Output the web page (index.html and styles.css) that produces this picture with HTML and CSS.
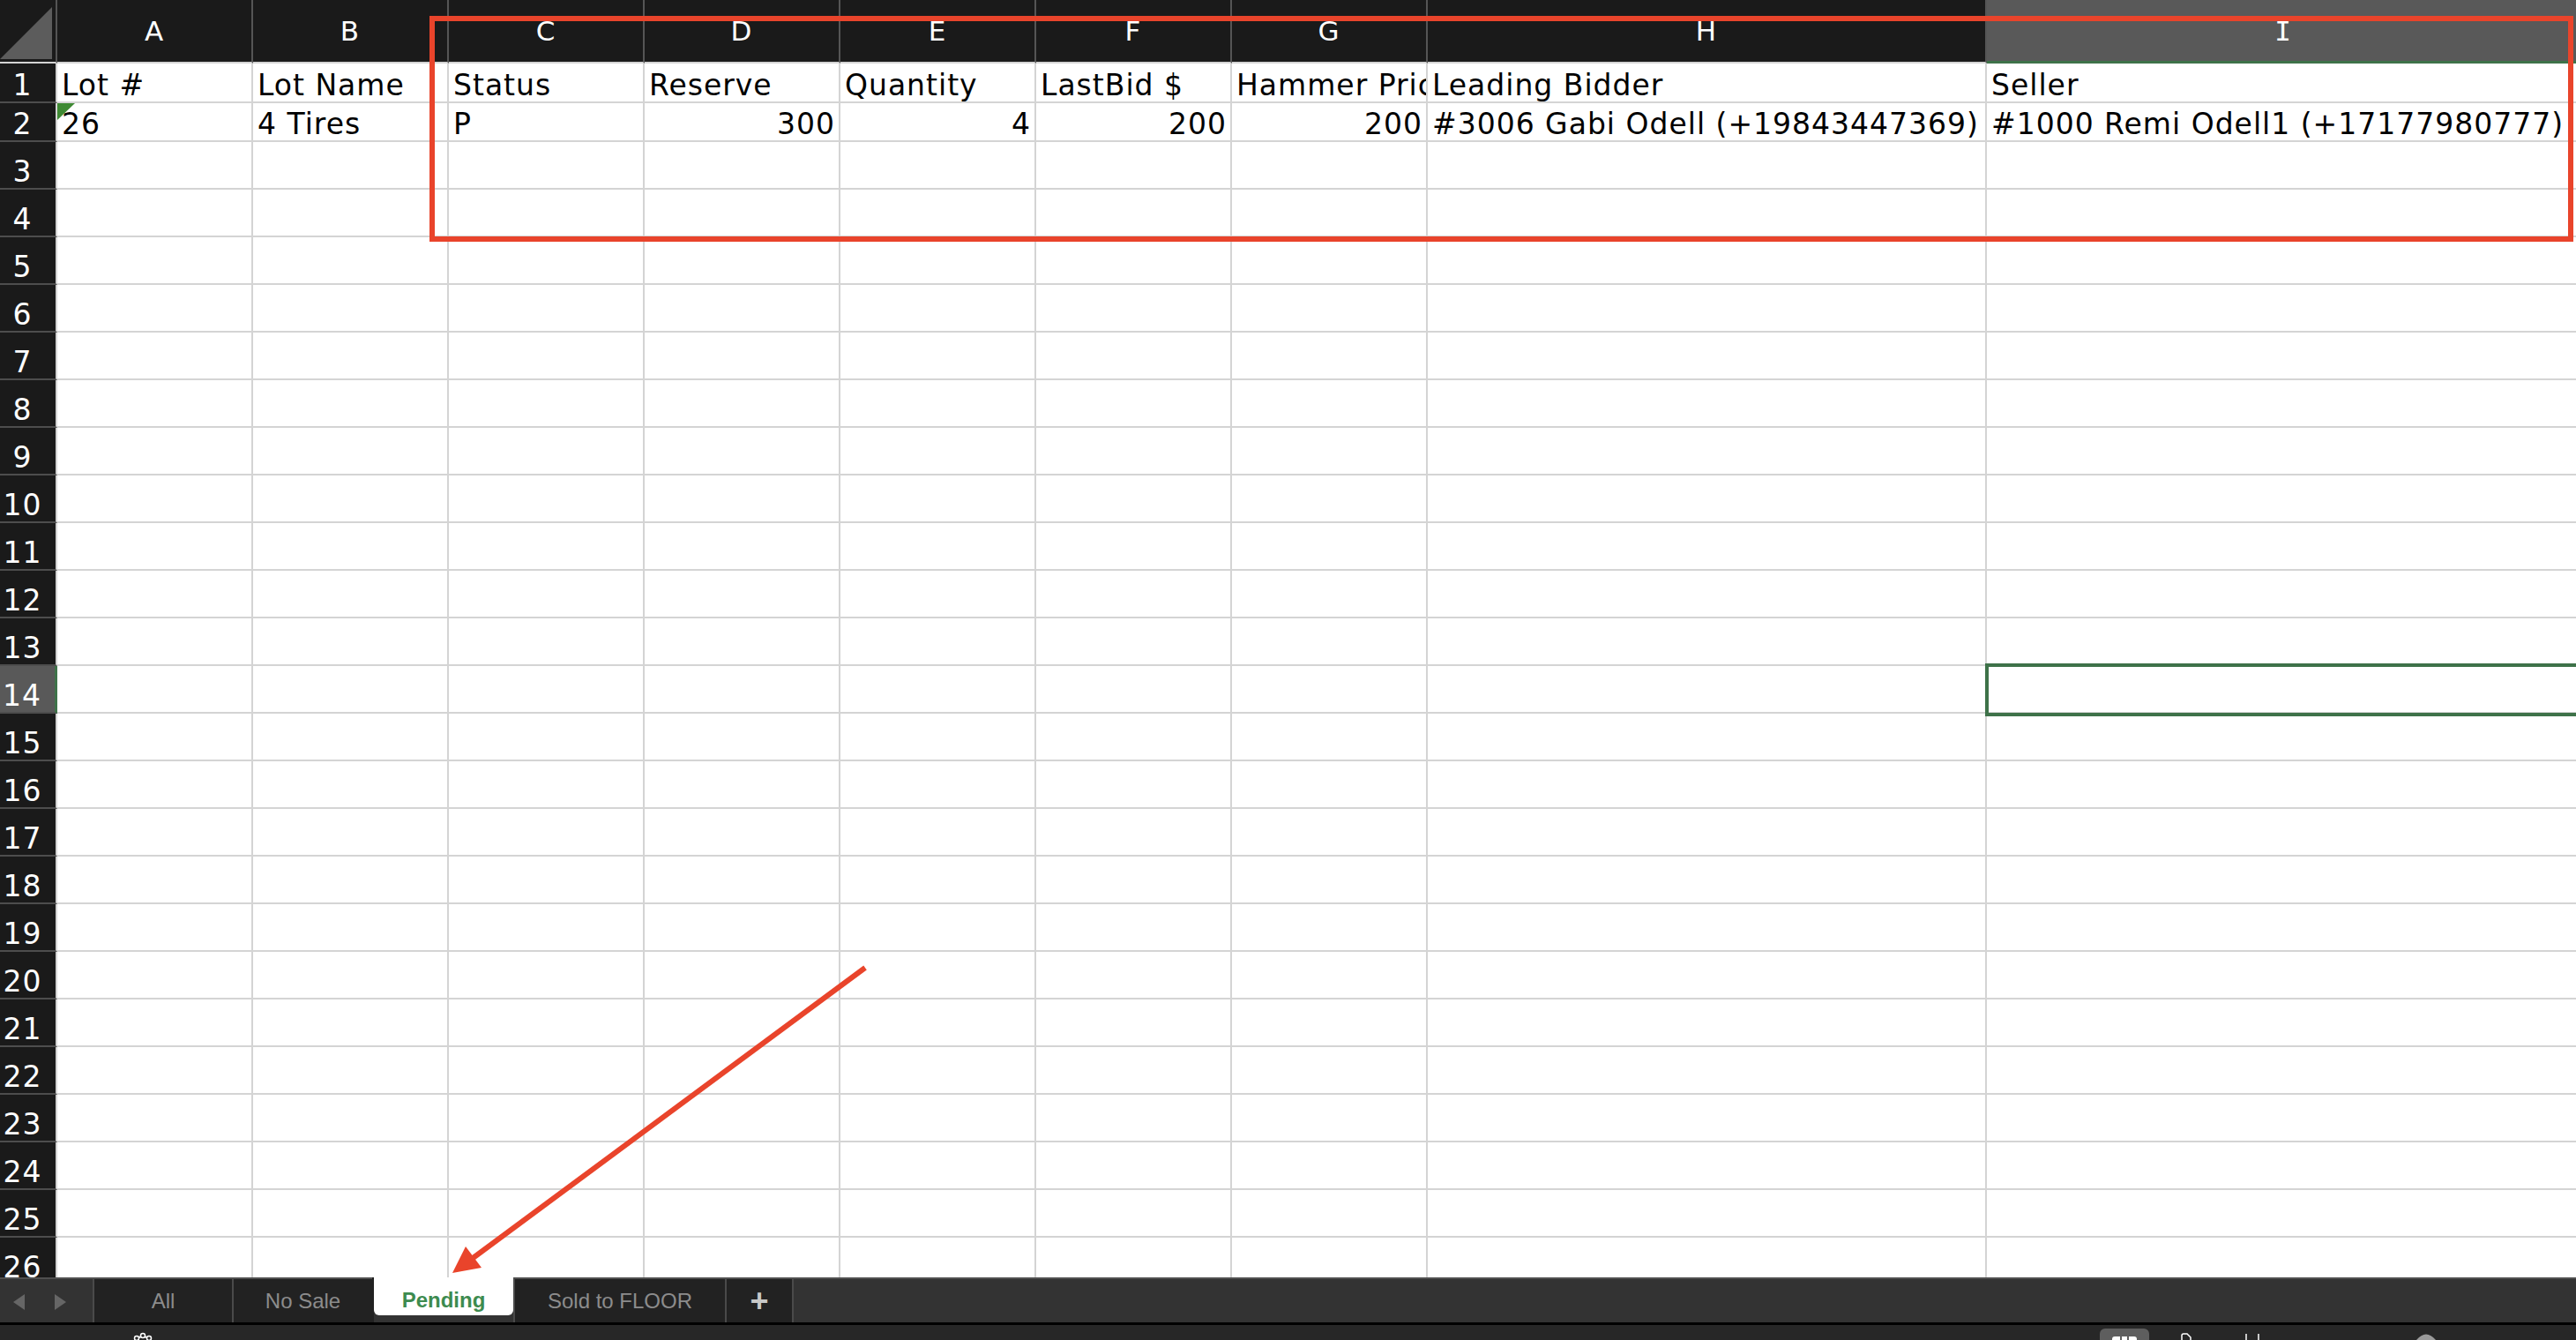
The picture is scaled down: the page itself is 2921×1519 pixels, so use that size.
FILE: index.html
```html
<!DOCTYPE html>
<html lang="en">

<head>
  <meta charset="UTF-8">
  <meta name="viewport" content="width=device-width, initial-scale=1.0">
  <link rel="stylesheet" href="styles.css">
  <title>Pending</title>
</head>

<body>
  <div class="sheet">
    <div class="row head">
      <div class="corner"><svg width="63" height="70"><polygon points="0,67 59,67 59,8" fill="#5c5c5c" /></svg></div>
      <div>A</div><div>B</div><div>C</div><div>D</div><div>E</div><div>F</div><div>G</div><div>H</div><div class="cur">I</div>
    </div>
    <div class="row r1">
      <div class="rh">1</div>
      <div>Lot #</div><div>Lot Name</div><div>Status</div><div>Reserve</div><div>Quantity</div><div>LastBid $</div><div>Hammer Price</div><div>Leading Bidder</div><div>Seller</div>
    </div>
    <div class="row r2">
      <div class="rh">2</div>
      <div class="flag">26</div><div>4 Tires</div><div>P</div><div class="num">300</div><div class="num">4</div><div class="num">200</div><div class="num">200</div><div>#3006 Gabi Odell (+19843447369)</div><div>#1000 Remi Odell1 (+17177980777)</div>
    </div>
    <div class="row"><div class="rh">3</div><div></div><div></div><div></div><div></div><div></div><div></div><div></div><div></div><div></div></div>
    <div class="row"><div class="rh">4</div><div></div><div></div><div></div><div></div><div></div><div></div><div></div><div></div><div></div></div>
    <div class="row"><div class="rh">5</div><div></div><div></div><div></div><div></div><div></div><div></div><div></div><div></div><div></div></div>
    <div class="row"><div class="rh">6</div><div></div><div></div><div></div><div></div><div></div><div></div><div></div><div></div><div></div></div>
    <div class="row"><div class="rh">7</div><div></div><div></div><div></div><div></div><div></div><div></div><div></div><div></div><div></div></div>
    <div class="row"><div class="rh">8</div><div></div><div></div><div></div><div></div><div></div><div></div><div></div><div></div><div></div></div>
    <div class="row"><div class="rh">9</div><div></div><div></div><div></div><div></div><div></div><div></div><div></div><div></div><div></div></div>
    <div class="row"><div class="rh">10</div><div></div><div></div><div></div><div></div><div></div><div></div><div></div><div></div><div></div></div>
    <div class="row"><div class="rh">11</div><div></div><div></div><div></div><div></div><div></div><div></div><div></div><div></div><div></div></div>
    <div class="row"><div class="rh">12</div><div></div><div></div><div></div><div></div><div></div><div></div><div></div><div></div><div></div></div>
    <div class="row"><div class="rh">13</div><div></div><div></div><div></div><div></div><div></div><div></div><div></div><div></div><div></div></div>
    <div class="row"><div class="rh cur">14</div><div></div><div></div><div></div><div></div><div></div><div></div><div></div><div></div><div></div></div>
    <div class="row"><div class="rh">15</div><div></div><div></div><div></div><div></div><div></div><div></div><div></div><div></div><div></div></div>
    <div class="row"><div class="rh">16</div><div></div><div></div><div></div><div></div><div></div><div></div><div></div><div></div><div></div></div>
    <div class="row"><div class="rh">17</div><div></div><div></div><div></div><div></div><div></div><div></div><div></div><div></div><div></div></div>
    <div class="row"><div class="rh">18</div><div></div><div></div><div></div><div></div><div></div><div></div><div></div><div></div><div></div></div>
    <div class="row"><div class="rh">19</div><div></div><div></div><div></div><div></div><div></div><div></div><div></div><div></div><div></div></div>
    <div class="row"><div class="rh">20</div><div></div><div></div><div></div><div></div><div></div><div></div><div></div><div></div><div></div></div>
    <div class="row"><div class="rh">21</div><div></div><div></div><div></div><div></div><div></div><div></div><div></div><div></div><div></div></div>
    <div class="row"><div class="rh">22</div><div></div><div></div><div></div><div></div><div></div><div></div><div></div><div></div><div></div></div>
    <div class="row"><div class="rh">23</div><div></div><div></div><div></div><div></div><div></div><div></div><div></div><div></div><div></div></div>
    <div class="row"><div class="rh">24</div><div></div><div></div><div></div><div></div><div></div><div></div><div></div><div></div><div></div></div>
    <div class="row"><div class="rh">25</div><div></div><div></div><div></div><div></div><div></div><div></div><div></div><div></div><div></div></div>
    <div class="row"><div class="rh">26</div><div></div><div></div><div></div><div></div><div></div><div></div><div></div><div></div><div></div></div>

    <!-- selected cell I14 -->
    <div class="selection"></div>
  </div>

  <div class="tabbar">
    <div class="nav"><span class="arr left"></span><span class="arr right"></span></div>
    <div class="tabs">
      <div class="tab t-all">All</div>
      <div class="tab t-nosale">No Sale</div>
      <div class="tab t-pending active"><div class="face">Pending</div></div>
      <div class="tab t-sold">Sold to FLOOR</div>
      <div class="tab t-add">+</div>
    </div>
  </div>
  <div class="divider"></div>
  <div class="status">
    <svg class="gear" width="30" height="17">
      <circle cx="15" cy="22" r="9" fill="none" stroke="#fff" stroke-width="2" />
      <circle cx="15" cy="12" r="2.5" fill="#272727" stroke="#fff" stroke-width="1.5" />
      <circle cx="8" cy="15" r="2.5" fill="#272727" stroke="#fff" stroke-width="1.5" />
      <circle cx="22" cy="15" r="2.5" fill="#272727" stroke="#fff" stroke-width="1.5" />
    </svg>
    <div class="pill">
      <svg width="56" height="13">
        <rect x="14" y="7" width="28" height="8" rx="3" fill="#fff" />
        <line x1="24" y1="7" x2="24" y2="13" stroke="#5e5e5e" stroke-width="2" />
        <line x1="32" y1="7" x2="32" y2="13" stroke="#5e5e5e" stroke-width="2" />
      </svg>
    </div>
    <svg class="doc" width="18" height="17">
      <path d="M4 17 V12 Q4 10 6 10 H10 L14 14 V17" fill="none" stroke="#fff" stroke-width="1.5" />
    </svg>
    <svg class="bars" width="22" height="17">
      <line x1="4" y1="10" x2="4" y2="17" stroke="#fff" stroke-width="1.5" />
      <line x1="18" y1="10" x2="18" y2="17" stroke="#fff" stroke-width="1.5" />
    </svg>
    <svg class="dome" width="30" height="17">
      <path d="M4 17 Q15 4 26 17 Z" fill="#9a9a9a" />
    </svg>
  </div>

  <!-- red annotations drawn over the screenshot -->
  <svg class="marks" width="2921" height="1519">
    <rect x="490" y="21" width="2425" height="250" fill="none" stroke="#e9442b" stroke-width="6" />
    <line x1="981" y1="1097" x2="535" y2="1427" stroke="#e9442b" stroke-width="6" />
    <polygon points="513,1443 528,1413 546,1437" fill="#e9442b" />
  </svg>
</body>

</html>
```

FILE: styles.css
```css
body {
  margin: 0;
  width: 2921px;
  height: 1519px;
  overflow: hidden;
  position: relative;
  background-color: #fff;
  font-family: "DejaVu Sans", Verdana, sans-serif;
}

.sheet {
  height: 1448px;
  overflow: hidden;
  position: relative;
}

.row {
  display: grid;
  grid-template-columns: 65px repeat(7, 222px) 634px 674px;
  height: 54px;
}

.row.head {
  height: 72px;
}

.row.r1 {
  height: 45px;
}

.row.r2 {
  height: 44px;
}

.row>div {
  box-sizing: border-box;
  border-right: 2px solid #d4d4d4;
  border-bottom: 2px solid #d4d4d4;
  display: flex;
  align-items: flex-end;
  padding: 0 5px;
  overflow: hidden;
  white-space: nowrap;
  font-size: 33px;
  letter-spacing: 1px;
  line-height: 36px;
  color: #000;
}

.row>.num {
  justify-content: flex-end;
  padding-right: 4px;
}

.row>.flag {
  position: relative;
}

.flag::before {
  content: "";
  position: absolute;
  top: 0;
  left: 0;
  border-top: 19px solid #3f8a34;
  border-right: 20px solid transparent;
}

/* row numbers */
.row>.rh {
  background-color: #1a1a1a;
  color: #fff;
  justify-content: center;
  padding: 0 12px 0 0;
  border-bottom-color: #4d4d4d;
}

.row>.rh.cur {
  background-color: #595959;
  border-right: 3px solid #3e7249;
}

/* column letters */
.head>div {
  background-color: #1a1a1a;
  color: #fff;
  justify-content: center;
  align-items: center;
  padding: 0;
  font-size: 31px;
  border-right-color: #555;
}

.head>.corner {
  display: block;
  padding: 0;
}

.head>.cur {
  background-color: #595959;
  border-bottom: 3px solid #3e7249;
  font-family: "DejaVu Sans Mono", monospace;
}

.selection {
  position: absolute;
  left: 2251px;
  top: 752px;
  width: 680px;
  height: 60px;
  box-sizing: border-box;
  border: 4px solid #3e7249;
}

/* sheet tabs */
.tabbar {
  display: flex;
  height: 51px;
  box-sizing: border-box;
  border-top: 2px solid #505050;
  background-color: #333;
  font-family: "Liberation Sans", Arial, sans-serif;
  font-size: 24px;
}

.nav {
  width: 105px;
  box-sizing: border-box;
  display: flex;
  align-items: center;
  gap: 34px;
  padding: 2px 0 0 15px;
}

.arr {
  width: 0;
  height: 0;
  border-top: 9px solid transparent;
  border-bottom: 9px solid transparent;
}

.arr.left {
  border-right: 13px solid #666;
}

.arr.right {
  border-left: 13px solid #666;
}

.tabs {
  display: flex;
  background-color: #222;
  border-right: 2px solid #4a4a4a;
}

.tab {
  box-sizing: border-box;
  border-left: 2px solid #4a4a4a;
  display: flex;
  align-items: center;
  justify-content: center;
  color: #8c8c8c;
}

.t-all {
  width: 158px;
}

.t-nosale {
  width: 159px;
}

.t-pending {
  width: 160px;
}

.t-sold {
  width: 240px;
}

.t-add {
  width: 76px;
  color: #c8c8c8;
  font-size: 36px;
  font-weight: bold;
}

.tab.active {
  margin-top: -2px;
  height: 51px;
  align-items: flex-start;
  background-color: #333;
  border-left-color: #222;
}

.face {
  width: 100%;
  height: 43px;
  box-sizing: border-box;
  padding-top: 8px;
  display: flex;
  align-items: center;
  justify-content: center;
  background-color: #fff;
  border-radius: 0 0 6px 6px;
  color: #3d8b4f;
  font-weight: bold;
}

.divider {
  height: 3px;
  background-color: #000;
}

.status {
  height: 17px;
  display: flex;
  align-items: flex-start;
  overflow: hidden;
  background-color: #272727;
}

.gear {
  margin-left: 147px;
}

.pill {
  margin: 4px 0 0 2204px;
  width: 56px;
  height: 13px;
  background-color: #5e5e5e;
  border-radius: 6px 6px 0 0;
}

.doc {
  margin-left: 33px;
}

.bars {
  margin-left: 55px;
}

.dome {
  margin-left: 171px;
}

.marks {
  position: absolute;
  left: 0;
  top: 0;
  pointer-events: none;
}
```
